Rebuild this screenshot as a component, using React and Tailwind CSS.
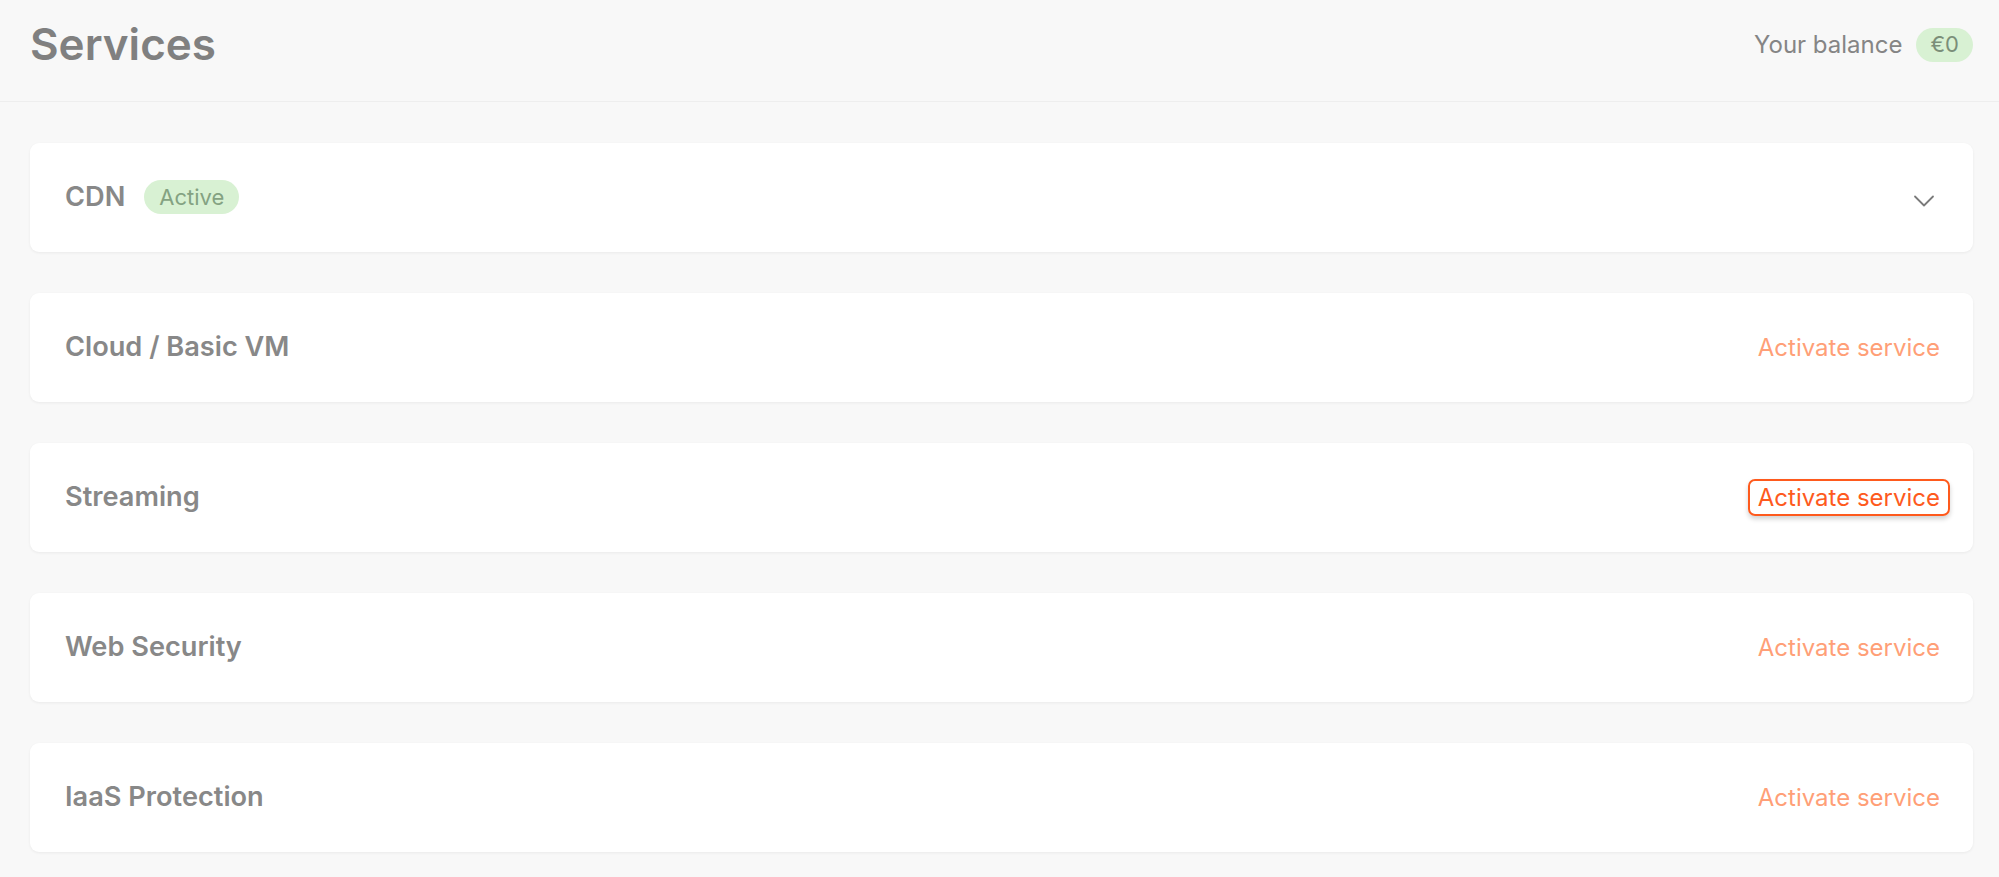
import { ChevronDown } from 'lucide-react'

const SERVICES = [
  { key: 'cdn', name: 'CDN', active: true },
  { key: 'vm', name: 'Cloud / Basic VM' },
  { key: 'streaming', name: 'Streaming', focused: true },
  { key: 'websec', name: 'Web Security' },
  { key: 'iaas', name: 'IaaS Protection' },
]

function ServiceCard({ service }) {
  return (
    <div className="flex h-[109px] items-center justify-between rounded-[9px] bg-white pl-[35px] pr-[23px] shadow-[0_1px_3px_rgba(0,0,0,0.06)]">
      <div className="flex items-center gap-[19px]">
        <span className="text-[27.2px] font-semibold text-[#888888]">{service.name}</span>
        {service.active && (
          <span className="flex h-[34px] items-center rounded-full bg-[#d8f1d3] px-[15px] text-[22px] text-[#84a282]">Active</span>
        )}
      </div>
      {service.active ? (
        <ChevronDown className="mr-[8px] mt-[7px] h-[36px] w-[36px] text-[#7a7a7a]" strokeWidth={1.2}/>
      ) : (
        <button
          className={`flex h-[37px] items-center rounded-[7px] border-2 px-[8px] text-[24px] ${service.focused ? 'border-[#fe5a1d] text-[#fe5a1d] shadow-[0_3px_5px_rgba(0,0,0,0.18)]' : 'border-transparent text-[#ff9f77]'}`}>
          Activate service
        </button>
      )}
    </div>
  )
}

export default function App() {
  return (
    <div className="min-h-screen bg-[#f8f8f8] font-['Inter','Liberation_Sans',sans-serif]">
      <header className="flex h-[102px] items-center justify-between border-b border-[#eeeeee] pl-[30px] pr-[26px]">
        <h1 className="mt-[-14px] text-[44px] font-semibold text-[#808080]">Services</h1>
        <div className="mt-[-12px] flex items-center gap-[14px]">
          <span className="text-[24px] text-[#858585]">Your balance</span>
          <span className="flex h-[34px] items-center rounded-full bg-[#d8f1d3] px-[14px] text-[22px] text-[#7b8e79]">€0</span>
        </div>
      </header>
      <main className="flex flex-col gap-[41px] pl-[30px] pr-[26px] pt-[41px] pb-[24px]">
        {SERVICES.map(s => (
          <ServiceCard key={s.key} service={s}/>
        ))}
      </main>
    </div>
  )
}
